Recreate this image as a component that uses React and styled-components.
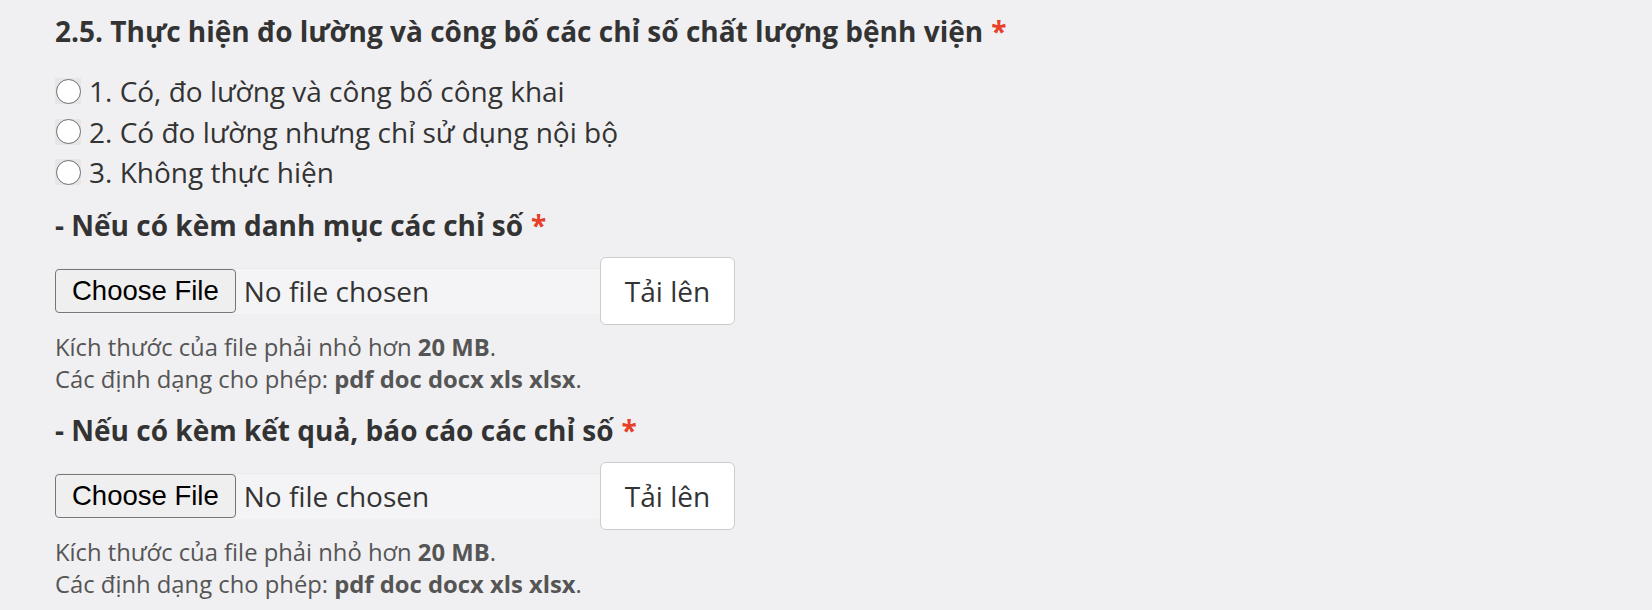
import React from 'react'
import styled, { createGlobalStyle } from 'styled-components'

const GlobalStyle = createGlobalStyle`
  body {
    margin: 0;
    background: #f0f0f2;
    font-family: "Open Sans", "Noto Sans", sans-serif;
    color: #333;
  }
`

const Page = styled.div`
  padding: 11px 0 0 55px;
`

const Title = styled.h2`
  margin: 0;
  font-size: 28px;
  font-weight: 700;
  line-height: 40px;
  color: #333;
`

const Required = styled.span`
  color: #e6402a;
  margin-left: 8px;
`

const Options = styled.div`
  margin-top: 20px;
  display: flex;
  flex-direction: column;
`

const Option = styled.label`
  display: flex;
  align-items: center;
  height: 40.5px;
  font-size: 28px;
  line-height: 40px;
  color: #333;
`

const RadioBox = styled.span`
  display: inline-flex;
  align-items: center;
  justify-content: center;
  width: 26px;
  height: 26px;
  margin-right: 8px;
  background: #e6e6e8;
`

const Radio = styled.input`
  appearance: none;
  margin: 0;
  width: 25px;
  height: 25px;
  border: 1.5px solid #6e6e6e;
  border-radius: 50%;
  background: #fff;
  box-sizing: border-box;
`

const SubTitle = styled.h3`
  margin: ${(p) => (p.$first ? '12px' : '14px')} 0 12px;
  font-size: 28px;
  font-weight: 700;
  line-height: 40px;
  color: #333;
`

const FileRow = styled.div`
  display: flex;
  align-items: center;
  height: 68px;
`

const FileBox = styled.label`
  display: flex;
  align-items: center;
  width: 545px;
  height: 46px;
  background: #f4f4f6;
  box-shadow: inset 0 1px 1px rgba(0, 0, 0, 0.04);
  input {
    display: none;
  }
`

const ChooseButton = styled.span`
  box-sizing: border-box;
  height: 44px;
  padding: 0 16px;
  display: inline-flex;
  align-items: center;
  border: 1px solid #767676;
  border-radius: 4px;
  background: #efefef;
  font-family: "Liberation Sans", Arial, sans-serif;
  font-size: 27.5px;
  color: #000;
`

const FileName = styled.span`
  margin-left: 8px;
  line-height: 44px;
  font-size: 28px;
  color: #333;
`

const UploadButton = styled.button`
  box-sizing: border-box;
  width: 135px;
  height: 68px;
  border: 1px solid #ccc;
  border-radius: 6px;
  background: #fff;
  font-family: "Open Sans", sans-serif;
  font-size: 28px;
  color: #333;
  padding: 0;
`

const Help = styled.div`
  margin-top: 6px;
  font-size: 23.8px;
  line-height: 32.5px;
  color: #555;
  b {
    font-weight: 700;
  }
`

const options = [
  '1. Có, đo lường và công bố công khai',
  '2. Có đo lường nhưng chỉ sử dụng nội bộ',
  '3. Không thực hiện',
]

const UploadField = ({ label, first }) => (
  <>
    <SubTitle $first={first}>
      {label}
      <Required>*</Required>
    </SubTitle>
    <FileRow>
      <FileBox>
        <input type="file" />
        <ChooseButton>Choose File</ChooseButton>
        <FileName>No file chosen</FileName>
      </FileBox>
      <UploadButton>Tải lên</UploadButton>
    </FileRow>
    <Help>
      Kích thước của file phải nhỏ hơn <b>20 MB</b>.
      <br />
      Các định dạng cho phép: <b>pdf doc docx xls xlsx</b>.
    </Help>
  </>
)

export default function App() {
  return (
    <Page>
      <GlobalStyle />
      <Title>
        2.5. Thực hiện đo lường và công bố các chỉ số chất lượng bệnh viện
        <Required>*</Required>
      </Title>
      <Options>
        {options.map((o) => (
          <Option key={o}>
            <RadioBox>
              <Radio type="radio" name="q25" />
            </RadioBox>
            {o}
          </Option>
        ))}
      </Options>
      <UploadField first label="- Nếu có kèm danh mục các chỉ số" />
      <UploadField label="- Nếu có kèm kết quả, báo cáo các chỉ số" />
    </Page>
  )
}
